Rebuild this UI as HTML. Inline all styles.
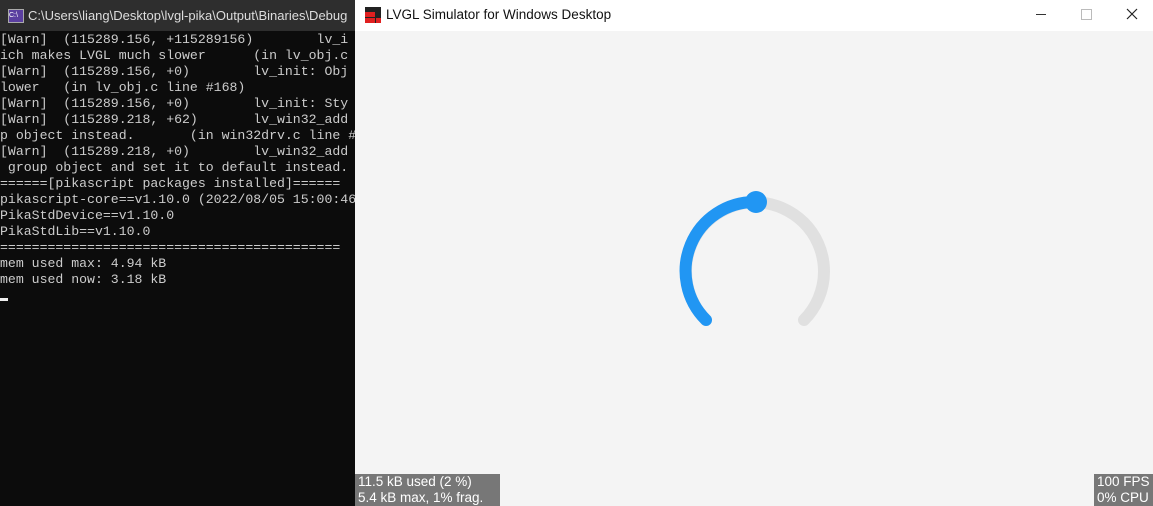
<!DOCTYPE html>
<html><head><style>
body{margin:0;width:1153px;height:506px;overflow:hidden;position:relative;background:#0c0c0c;font-family:"Liberation Sans",sans-serif}
#ctb{position:absolute;left:0;top:0;width:360px;height:31px;background:#2e2e2e;color:#ddd;font-size:13px}
#con{position:absolute;left:0;top:32px;width:355px;height:474px;background:#0c0c0c;color:#cccccc;font-family:"Liberation Mono",monospace;font-size:13.2px;line-height:16px;white-space:pre;overflow:hidden}
#sim{position:absolute;left:355px;top:0;width:798px;height:506px;background:#f4f4f4}
#stb{position:absolute;left:0;top:0;width:798px;height:31px;background:#fff;font-size:13.5px;color:#111}
.ov{position:absolute;background:#777;color:#fff;font-size:13.5px;line-height:16px;padding:0 3px;white-space:pre}
</style></head><body>
<div id="ctb"><div style="position:absolute;left:8px;top:9px;width:14px;height:12px;background:#5b3fa0;border:1px solid #aaa;font-size:7px;color:#fff;line-height:12px">C:\</div><div style="position:absolute;left:28px;top:8px;white-space:nowrap">C:\Users\liang\Desktop\lvgl-pika\Output\Binaries\Debug</div></div>
<div id="con">[Warn]  (115289.156, +115289156)        lv_i
ich makes LVGL much slower      (in lv_obj.c
[Warn]  (115289.156, +0)        lv_init: Obj
lower   (in lv_obj.c line #168)
[Warn]  (115289.156, +0)        lv_init: Sty
[Warn]  (115289.218, +62)       lv_win32_add
p object instead.       (in win32drv.c line #
[Warn]  (115289.218, +0)        lv_win32_add
 group object and set it to default instead.
======[pikascript packages installed]======
pikascript-core==v1.10.0 (2022/08/05 15:00:46
PikaStdDevice==v1.10.0
PikaStdLib==v1.10.0
===========================================
mem used max: 4.94 kB
mem used now: 3.18 kB
</div>
<div style="position:absolute;left:0;top:298px;width:8px;height:3px;background:#eee"></div>
<div id="sim">
<div id="stb">
<svg style="position:absolute;left:10px;top:7px" width="16" height="16"><rect width="16" height="16" fill="#222"/><rect x="0" y="5" width="5" height="5" fill="#e02020"/><rect x="5" y="5" width="5" height="5" fill="#e02020"/><rect x="0" y="11" width="5" height="5" fill="#e02020"/><rect x="5" y="11" width="5" height="5" fill="#e02020"/><rect x="11" y="11" width="5" height="5" fill="#e02020"/></svg>
<div style="position:absolute;left:31px;top:7px">LVGL Simulator for Windows Desktop</div>
<div style="position:absolute;left:681px;top:14px;width:10px;height:1px;background:#333"></div>
<div style="position:absolute;left:726px;top:9px;width:9px;height:9px;border:1px solid #bbb"></div>
<svg style="position:absolute;left:771px;top:8px" width="12" height="12"><path d="M1 1L11 11M11 1L1 11" stroke="#222" stroke-width="1.2"/></svg>
</div>
<svg style="position:absolute;left:0;top:0" width="798" height="506">
<path d="M351 320 A69 69 0 1 1 449 320" fill="none" stroke="#e0e0e0" stroke-width="12" stroke-linecap="round"/>
<path d="M351 320 A69 69 0 0 1 400 202" fill="none" stroke="#2196f3" stroke-width="12" stroke-linecap="round"/>
<circle cx="401" cy="202" r="11" fill="#2196f3"/>
</svg>
<div class="ov" style="left:0;top:474px;width:139px">11.5 kB used (2 %)
5.4 kB max, 1% frag.</div>
<div class="ov" style="left:739px;top:474px;width:53px">100 FPS
0% CPU</div>
</div>
</body></html>
